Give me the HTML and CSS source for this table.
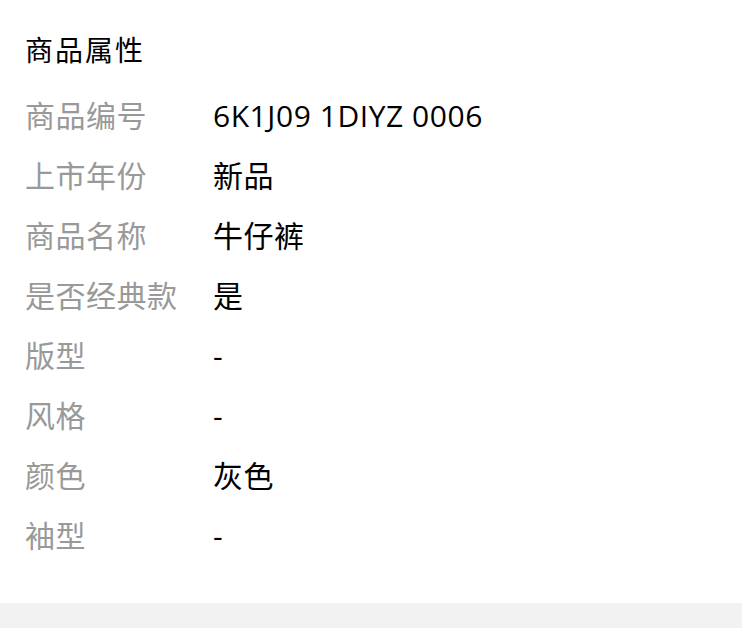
FILE: index.html
```html
<!DOCTYPE html>
<html lang="zh">
<head>
<meta charset="utf-8">
<link rel="stylesheet" href="styles.css">
</head>
<body>
<section class="attrs">
  <h2 class="title">商品属性</h2>
  <div class="list">
    <div class="row"><span class="label">商品编号</span><span class="value">6K1J09 1DIYZ 0006</span></div>
    <div class="row"><span class="label">上市年份</span><span class="value">新品</span></div>
    <div class="row"><span class="label">商品名称</span><span class="value">牛仔裤</span></div>
    <div class="row"><span class="label">是否经典款</span><span class="value">是</span></div>
    <div class="row"><span class="label">版型</span><span class="value">-</span></div>
    <div class="row"><span class="label">风格</span><span class="value">-</span></div>
    <div class="row"><span class="label">颜色</span><span class="value">灰色</span></div>
    <div class="row"><span class="label">袖型</span><span class="value">-</span></div>
  </div>
</section>
<div class="footer-bar"></div>
</body>
</html>
```
FILE: styles.css
```css
html, body {
  margin: 0;
  padding: 0;
  background: #fff;
}
body {
  width: 750px;
  font-family: "Open Sans", "Noto Sans CJK SC", sans-serif;
}
.attrs {
  padding: 30px 25px 37px;
}
.title {
  margin: 0 0 16px;
  font-size: 28px;
  font-weight: 400;
  line-height: 40px;
  letter-spacing: 2px;
  color: #000;
}
.list {
  display: flex;
  flex-direction: column;
}
.row {
  display: flex;
  height: 60px;
  align-items: center;
  font-size: 30px;
  line-height: 60px;
}
.label {
  width: 188px;
  flex: none;
  color: #999;
  letter-spacing: 0.5px;
}
.value {
  color: #000;
  letter-spacing: 0.55px;
}
.footer-bar {
  width: 742px;
  height: 25px;
  background: #f2f2f2;
}
```
